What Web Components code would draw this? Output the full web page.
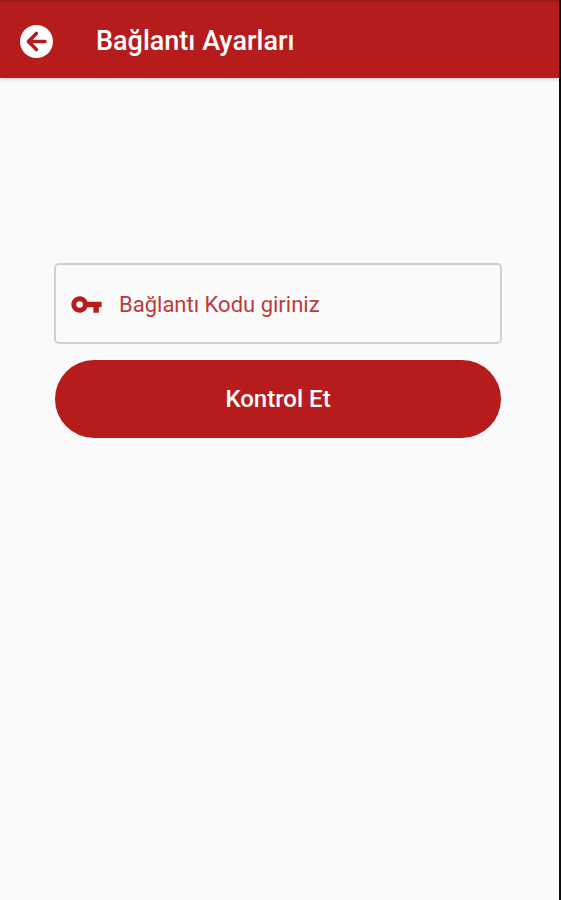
<!DOCTYPE html>
<html lang="tr">
<head>
<meta charset="utf-8">
<meta name="viewport" content="width=device-width, initial-scale=1">
<title>Bağlantı Ayarları</title>
<style>
  body { margin: 0; font-family: Roboto, "Liberation Sans", sans-serif; }
</style>
</head>
<body>
<settings-screen>
  <app-bar slot="bar">Bağlantı Ayarları</app-bar>
  <code-field label="Bağlantı Kodu giriniz"></code-field>
  <pill-button>Kontrol Et</pill-button>
</settings-screen>
<script>
  class BaseElement extends HTMLElement {
    constructor() {
      super();
      this.attachShadow({ mode: "open" }).innerHTML = this.constructor.markup;
    }
  }

  customElements.define("settings-screen", class extends BaseElement {
    static markup = `
      <style>
        :host {
          display: flex; flex-direction: column; box-sizing: border-box;
          min-height: 100vh; background: #fafafa; border-right: 2px solid #0c0c0c;
          --brand: #b71c1c;
        }
        main { display: flex; flex-direction: column; gap: 16px; padding: 185px 57px 32px 54px; }
      </style>
      <slot name="bar"></slot>
      <main><slot></slot></main>`;
  });

  customElements.define("app-bar", class extends BaseElement {
    static markup = `
      <style>
        :host { display: block; }
        header {
          display: flex; align-items: center; gap: 43px; box-sizing: border-box;
          height: 78px; padding: 2px 20px 0; background: var(--brand); color: #fff;
          border-top: 2px solid #971a1b;
          box-shadow: 0 1px 4px rgba(0, 0, 0, .2);
        }
        button { display: flex; padding: 0; border: 0; background: none; color: inherit; cursor: pointer; }
        svg { display: block; width: 33px; height: 33px; }
        h1 { margin: 0; font-size: 27px; line-height: 34px; font-weight: 500; white-space: nowrap; }
      </style>
      <header>
        <button type="button" aria-label="Geri">
          <svg viewBox="0 0 33 33" aria-hidden="true">
            <circle cx="16.5" cy="16.5" r="16.5" fill="currentColor"/>
            <path d="M16.4 8.5 8.4 16.5l8 8M8.6 16.5H25" fill="none" stroke="#b71c1c" stroke-width="3.6" stroke-linecap="round" stroke-linejoin="round"/>
          </svg>
        </button>
        <h1><slot></slot></h1>
      </header>`;
  });

  customElements.define("code-field", class extends BaseElement {
    static markup = `
      <style>
        :host { display: block; }
        label {
          display: flex; align-items: center; gap: 16px; box-sizing: border-box;
          height: 81px; padding: 2px 14px 0; border: 2px solid #d0d0d0; border-radius: 5px;
          color: var(--brand);
        }
        svg { flex: none; width: 33px; height: 33px; }
        input {
          flex: 1; min-width: 0; padding: 0; border: 0; outline: 0; background: none;
          font: 400 22px/28px Roboto, "Liberation Sans", sans-serif; color: inherit;
        }
        input::placeholder { color: #bd3a3c; opacity: 1; }
      </style>
      <label>
        <svg viewBox="0 0 24 24" aria-hidden="true">
          <path fill="currentColor" d="M12.65 10C11.83 7.67 9.61 6 7 6c-3.31 0-6 2.69-6 6s2.69 6 6 6c2.61 0 4.83-1.67 5.65-4H17v4h4v-4h2v-4H12.65zM7 14.4a2.4 2.4 0 1 1 0-4.8 2.4 2.4 0 0 1 0 4.8z"/>
        </svg>
        <input type="text">
      </label>`;
    connectedCallback() {
      const input = this.shadowRoot.querySelector("input");
      input.placeholder = this.getAttribute("label");
      input.setAttribute("aria-label", this.getAttribute("label"));
    }
  });

  customElements.define("pill-button", class extends BaseElement {
    static markup = `
      <style>
        :host { display: block; padding: 0 1px; }
        button {
          display: block; width: 100%; height: 78px; padding: 0; border: 0; border-radius: 39px;
          background: var(--brand); color: #fff; cursor: pointer;
          font: 500 24px/32px Roboto, "Liberation Sans", sans-serif;
        }
      </style>
      <button type="button"><slot></slot></button>`;
  });
</script>
</body>
</html>
